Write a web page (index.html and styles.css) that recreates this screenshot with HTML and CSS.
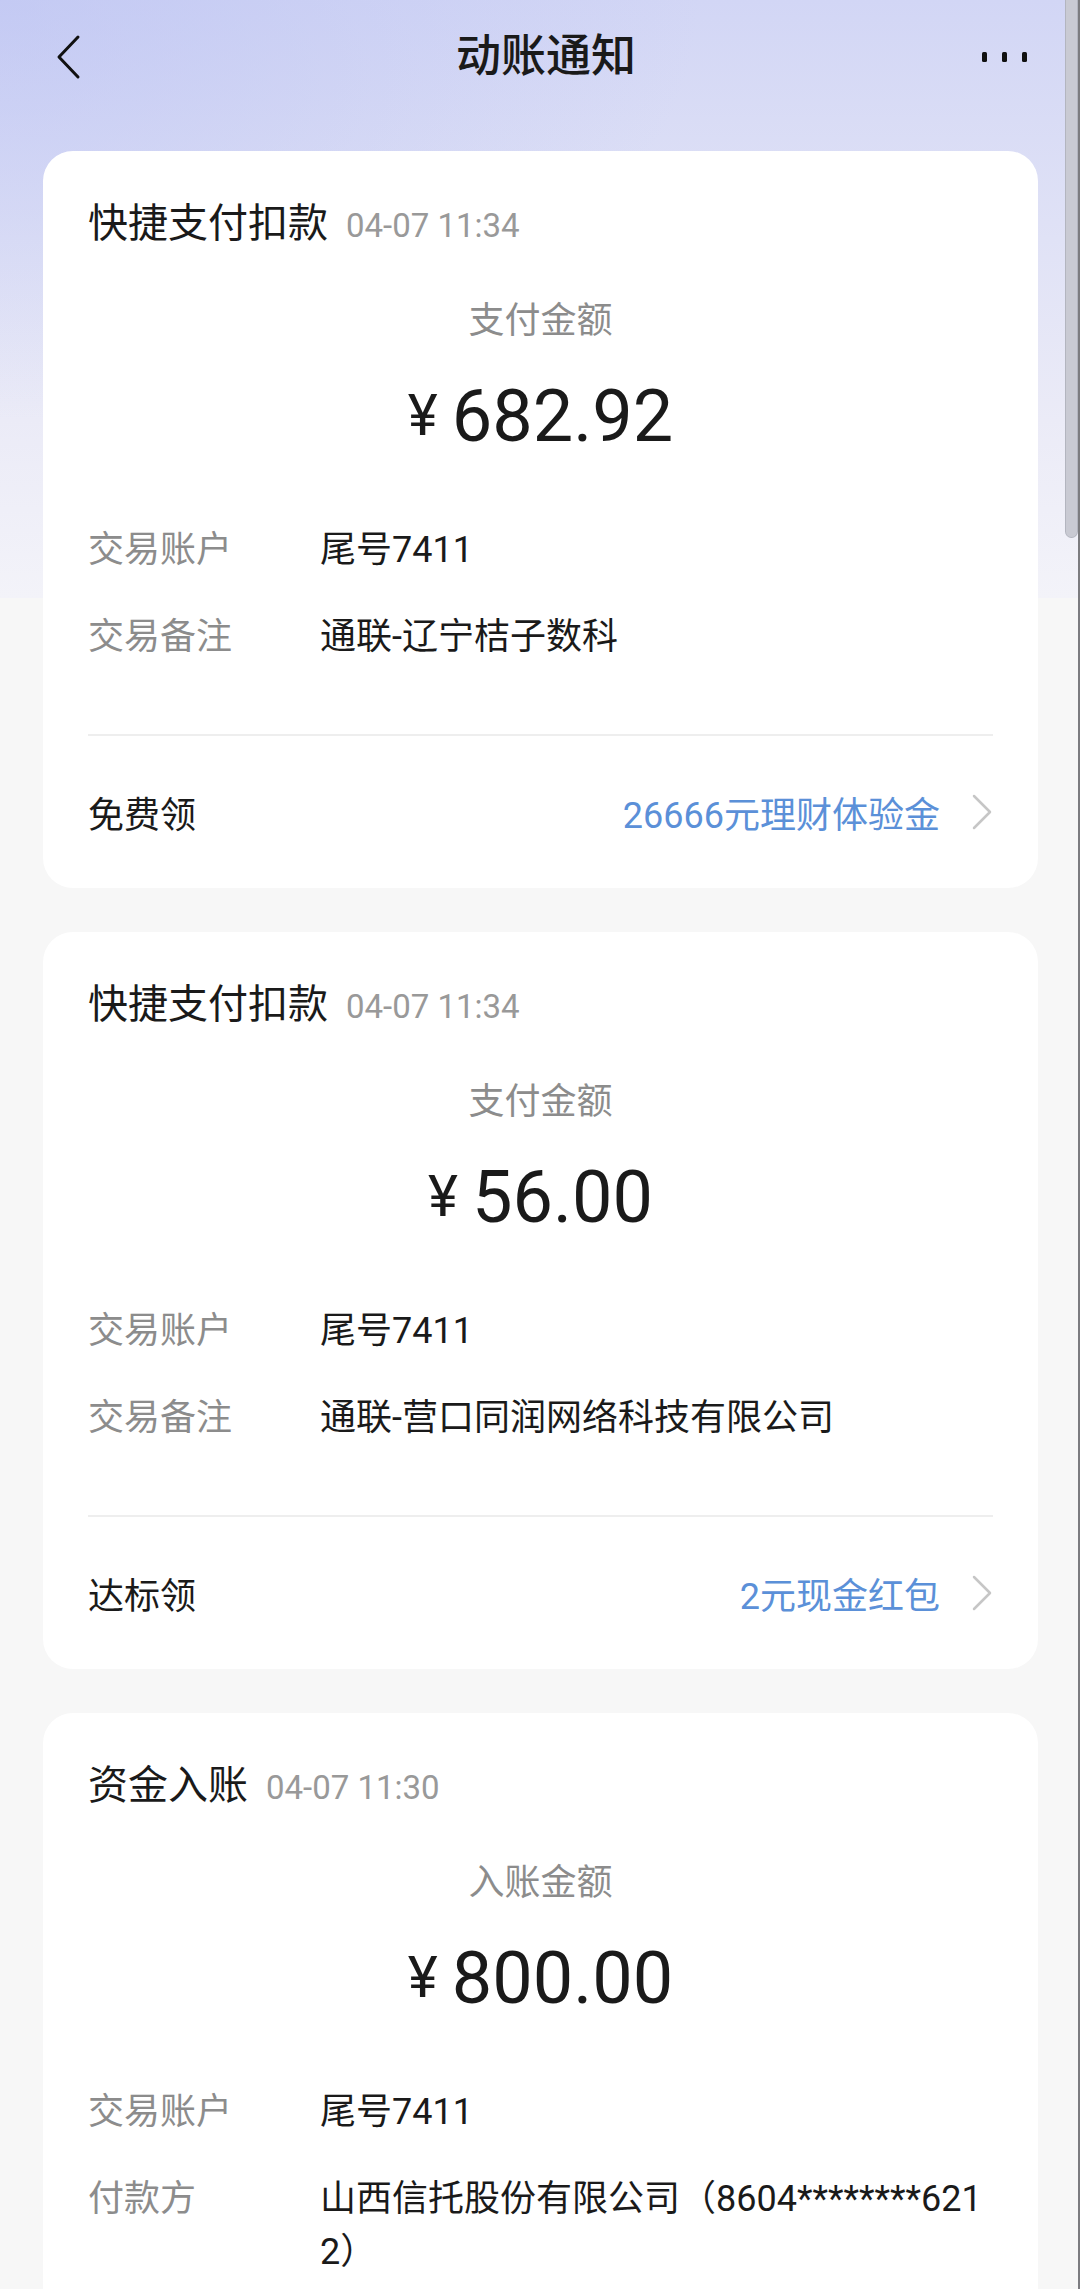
FILE: index.html
```html
<!DOCTYPE html>
<html lang="zh-CN">
<head>
    <meta charset="UTF-8" />
    <meta name="viewport" content="width=device-width, initial-scale=1.0" />
    <title>动账通知</title>
    <link rel="stylesheet" href="styles.css">
</head>
<body>
    <div class="page">
        <header class="nav">
            <div class="nav-left">
                <svg class="back" width="26" height="46" viewBox="0 0 26 46">
                    <path d="M22 3 L3 23 L22 43" fill="none" stroke="#111" stroke-width="3" stroke-linecap="round" stroke-linejoin="round" />
                </svg>
            </div>
            <h1 class="nav-title">动账通知</h1>
            <div class="nav-right">
                <svg class="more" width="46" height="12" viewBox="0 0 46 12">
                    <rect x="0" y="1" width="5" height="10" rx="1.5" fill="#111" />
                    <rect x="20" y="1" width="5" height="10" rx="1.5" fill="#111" />
                    <rect x="40" y="1" width="5" height="10" rx="1.5" fill="#111" />
                </svg>
            </div>
        </header>

        <div class="list">
            <section class="card">
                <div class="card-head">快捷支付扣款<span class="time">04-07 11:34</span></div>
                <div class="amount-label">支付金额</div>
                <div class="amount"><span class="yen">¥</span><span>682.92</span></div>
                <div class="details">
                    <div class="row"><span class="row-label">交易账户</span><span class="row-value">尾号7411</span></div>
                    <div class="row"><span class="row-label">交易备注</span><span class="row-value">通联-辽宁桔子数科</span></div>
                </div>
                <div class="divider"></div>
                <div class="foot">
                    <span>免费领</span>
                    <span class="link">26666元理财体验金
                        <svg class="arrow" width="22" height="36" viewBox="0 0 22 36">
                            <path d="M3 2 L19 18 L3 34" fill="none" stroke="#c6c6c6" stroke-width="2.5" stroke-linecap="round" stroke-linejoin="round" />
                        </svg>
                    </span>
                </div>
            </section>

            <section class="card">
                <div class="card-head">快捷支付扣款<span class="time">04-07 11:34</span></div>
                <div class="amount-label">支付金额</div>
                <div class="amount"><span class="yen">¥</span><span>56.00</span></div>
                <div class="details">
                    <div class="row"><span class="row-label">交易账户</span><span class="row-value">尾号7411</span></div>
                    <div class="row"><span class="row-label">交易备注</span><span class="row-value">通联-营口同润网络科技有限公司</span></div>
                </div>
                <div class="divider"></div>
                <div class="foot">
                    <span>达标领</span>
                    <span class="link">2元现金红包
                        <svg class="arrow" width="22" height="36" viewBox="0 0 22 36">
                            <path d="M3 2 L19 18 L3 34" fill="none" stroke="#c6c6c6" stroke-width="2.5" stroke-linecap="round" stroke-linejoin="round" />
                        </svg>
                    </span>
                </div>
            </section>

            <section class="card">
                <div class="card-head">资金入账<span class="time">04-07 11:30</span></div>
                <div class="amount-label">入账金额</div>
                <div class="amount"><span class="yen">¥</span><span>800.00</span></div>
                <div class="details">
                    <div class="row"><span class="row-label">交易账户</span><span class="row-value">尾号7411</span></div>
                    <div class="row"><span class="row-label">付款方</span><span class="row-value">山西信托股份有限公司（8604********6212）</span></div>
                </div>
            </section>
        </div>

        <div class="scrollbar"><div class="thumb"></div></div>
    </div>
</body>
</html>
```

FILE: styles.css
```css
body {
    margin: 0;
    font-family: Roboto, "Noto Sans CJK SC", sans-serif;
    color: #1a1a1a;
    background-color: #f7f7f7;
}

.page {
    position: relative;
    height: 100vh;
    overflow: hidden;
    background:
        radial-gradient(ellipse 700px 420px at 0 0, rgba(182, 190, 242, 0.5), rgba(182, 190, 242, 0)),
        linear-gradient(180deg, #d2d6f5 0, #e0e2f6 240px, #ebebf7 420px, #f3f3f9 598px, #f7f7f7 598px);
}

.nav {
    display: grid;
    grid-template-columns: 1fr auto 1fr;
    align-items: center;
    height: 114px;
}

.nav-left {
    padding-left: 56px;
    display: flex;
    align-items: center;
}

.nav-right {
    display: flex;
    justify-content: flex-end;
    padding-right: 52px;
}

.nav-title {
    margin: 0 0 0 12px;
    font-size: 45px;
    font-weight: 500;
    line-height: 60px;
}

.list {
    padding: 37px 42px 0 43px;
}

.card {
    background-color: #ffffff;
    border-radius: 30px;
    padding: 0 45px 40px;
    margin-bottom: 44px;
}

.card-head {
    padding-top: 48px;
    height: 50px;
    font-size: 40px;
    line-height: 50px;
}

.time {
    font-size: 33px;
    color: #999999;
    margin-left: 18px;
}

.amount-label {
    margin-top: 47px;
    height: 50px;
    text-align: center;
    font-size: 36px;
    line-height: 50px;
    color: #8c8c8c;
}

.amount {
    margin-top: 26px;
    height: 90px;
    display: flex;
    justify-content: center;
    align-items: baseline;
    font-size: 72px;
    line-height: 90px;
}

.yen {
    font-size: 57px;
    margin-right: 14px;
    position: relative;
    top: -6px;
}

.details {
    margin-top: 62px;
    display: grid;
    gap: 34px;
}

.row {
    display: flex;
    font-size: 36px;
    line-height: 53px;
}

.row-label {
    width: 232px;
    flex-shrink: 0;
    color: #8c8c8c;
}

.row-value {
    flex: 1;
    word-break: break-all;
}

.divider {
    margin-top: 70px;
    height: 2px;
    background-color: #eeeeee;
}

.foot {
    height: 152px;
    margin-bottom: -40px;
    display: flex;
    align-items: center;
    justify-content: space-between;
    font-size: 36px;
}

.link {
    display: flex;
    align-items: center;
    color: #5b90d8;
}

.arrow {
    margin-left: 31px;
}

.scrollbar {
    position: absolute;
    top: 0;
    right: 0;
    bottom: 0;
    width: 2px;
    background-color: #7c7c80;
}

.thumb {
    position: absolute;
    top: 0;
    right: 2px;
    width: 11px;
    height: 537px;
    background-color: #c9cad3;
    border: 1px solid #b3b5bf;
    border-top: none;
    border-radius: 0 0 7px 7px;
}
```
